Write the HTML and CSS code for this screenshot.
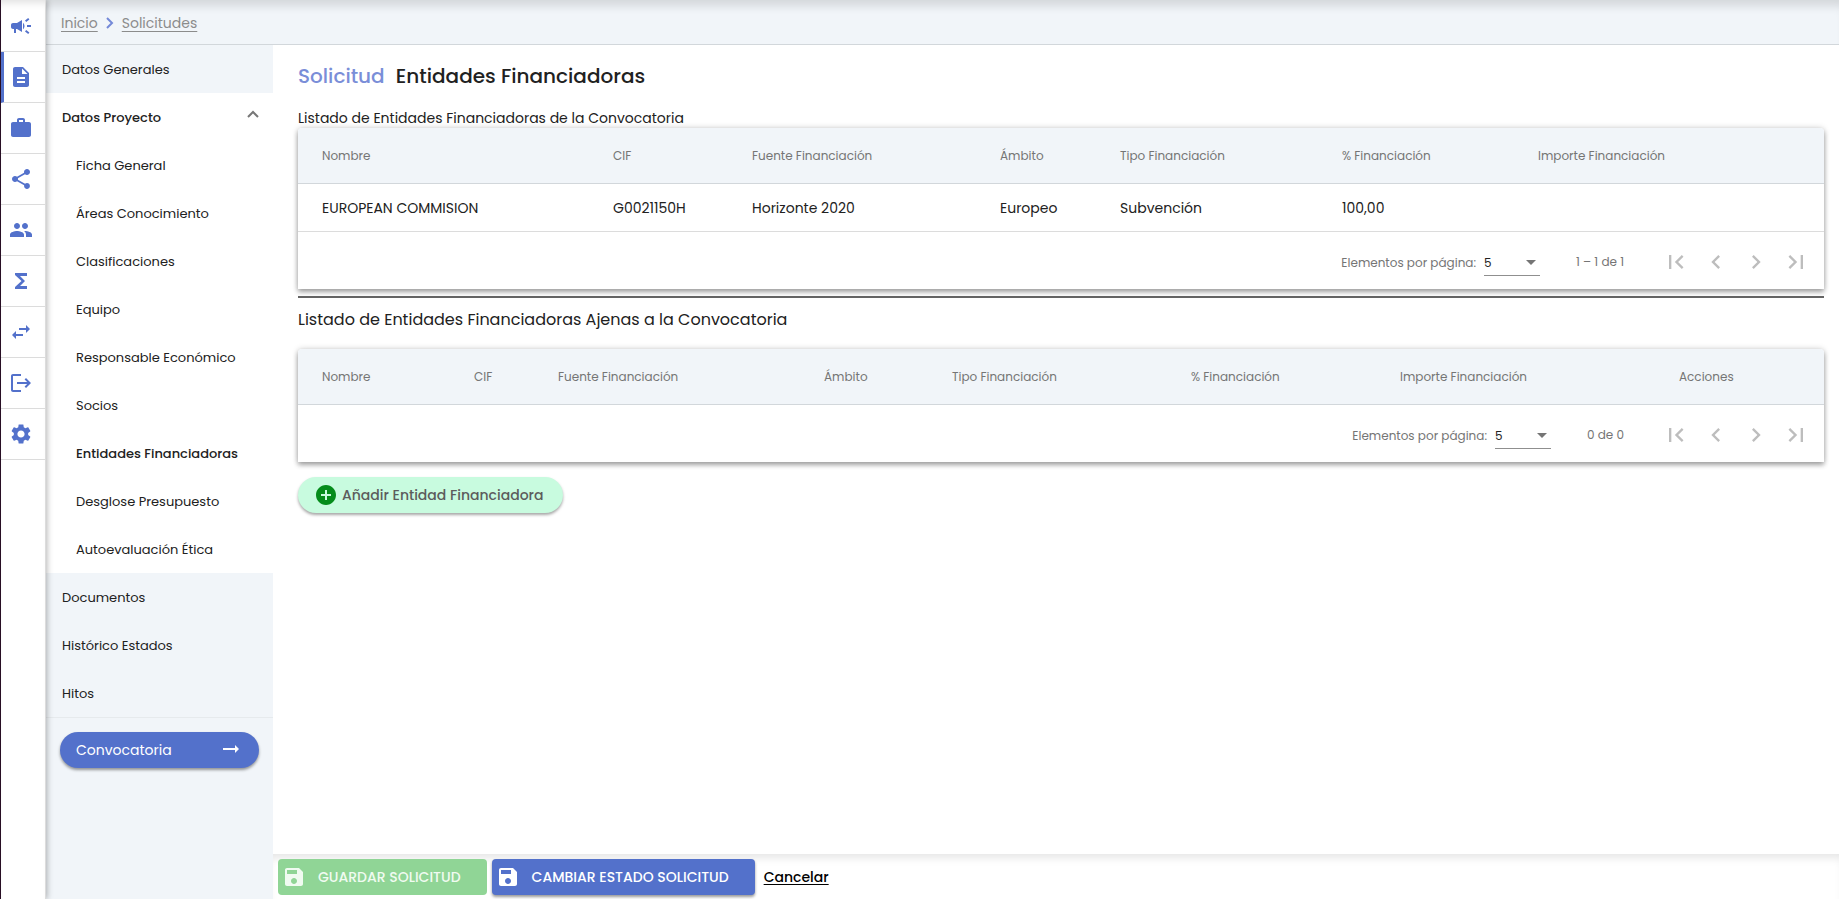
FILE: index.html
```html
<!DOCTYPE html>
<html lang="es">
<head>
<meta charset="utf-8">
<title>Solicitud - Entidades Financiadoras</title>
<link rel="stylesheet" href="styles.css">
</head>
<body>
<svg class="sprite" aria-hidden="true">
  <symbol id="i-campaign" viewBox="0 0 24 24"><path d="M18 11v2h4v-2h-4zm-2 6.610c.96.71 2.210 1.650 3.200 2.390.4-.53.8-1.070 1.200-1.600-.99-.74-2.240-1.680-3.200-2.400-.4.54-.8 1.080-1.200 1.610zM20.400 5.600c-.4-.53-.8-1.070-1.200-1.600-.99.74-2.240 1.680-3.200 2.400.4.53.8 1.070 1.200 1.600.96-.72 2.210-1.650 3.200-2.400zM4 9c-1.100 0-2 .9-2 2v2c0 1.100.9 2 2 2h1v4h2v-4h1l5 3V6L8 9H4zm11.500 3c0-1.330-.58-2.530-1.500-3.350v6.690c.92-.81 1.500-2.010 1.500-3.340z"/></symbol>
  <symbol id="i-doc" viewBox="0 0 24 24"><path d="M14 2H6c-1.100 0-1.990.9-1.990 2L4 20c0 1.100.89 2 1.990 2H18c1.100 0 2-.9 2-2V8l-6-6zm2 16H8v-2h8v2zm0-4H8v-2h8v2zm-3-5V3.500L18.500 9H13z"/></symbol>
  <symbol id="i-work" viewBox="0 0 24 24"><path d="M20 6h-4V4c0-1.110-.89-2-2-2h-4c-1.110 0-2 .89-2 2v2H4c-1.110 0-1.990.89-1.990 2L2 19c0 1.110.89 2 2 2h16c1.110 0 2-.89 2-2V8c0-1.110-.89-2-2-2zm-6 0h-4V4h4v2z"/></symbol>
  <symbol id="i-share" viewBox="0 0 24 24"><path d="M18 16.080c-.76 0-1.440.3-1.960.77L8.910 12.700c.05-.23.09-.46.09-.7s-.04-.47-.09-.7l7.050-4.110c.54.5 1.250.81 2.040.81 1.660 0 3-1.340 3-3s-1.340-3-3-3-3 1.340-3 3c0 .24.04.47.09.7L8.040 9.810C7.500 9.310 6.790 9 6 9c-1.660 0-3 1.340-3 3s1.340 3 3 3c.79 0 1.500-.31 2.040-.81l7.120 4.160c-.05.21-.08.43-.08.65 0 1.610 1.310 2.920 2.920 2.920s2.920-1.310 2.920-2.920-1.310-2.920-2.920-2.920z"/></symbol>
  <symbol id="i-people" viewBox="0 0 24 24"><path d="M16 11c1.660 0 2.990-1.340 2.990-3S17.660 5 16 5s-3 1.340-3 3 1.340 3 3 3zm-8 0c1.660 0 2.990-1.340 2.990-3S9.660 5 8 5 5 6.340 5 8s1.340 3 3 3zm0 2c-2.330 0-7 1.170-7 3.500V19h14v-2.500c0-2.330-4.670-3.500-7-3.500zm8 0c-.29 0-.62.02-.97.05 1.160.84 1.970 1.970 1.970 3.450V19h6v-2.500c0-2.330-4.670-3.500-7-3.500z"/></symbol>
  <symbol id="i-sum" viewBox="0 0 24 24"><path d="M18 4H6v2l6.500 6L6 18v2h12v-3h-7l5-5-5-5h7z"/></symbol>
  <symbol id="i-swap" viewBox="0 0 24 24"><path d="M6.990 11L3 15l3.990 4v-3H14v-2H6.990v-3zM21 9l-3.990-4v3H10v2h7.010v3L21 9z"/></symbol>
  <symbol id="i-exit" viewBox="0 0 24 24"><path d="M17 7l-1.410 1.410L18.170 11H8v2h10.170l-2.580 2.580L17 17l5-5zM4 5h8V3H4c-1.100 0-2 .9-2 2v14c0 1.100.9 2 2 2h8v-2H4V5z"/></symbol>
  <symbol id="i-gear" viewBox="0 0 24 24"><path d="M19.140 12.940c.04-.3.06-.61.06-.94 0-.32-.02-.64-.07-.94l2.030-1.580c.18-.14.23-.41.12-.61l-1.920-3.320c-.12-.22-.37-.29-.59-.22l-2.390.96c-.5-.38-1.030-.7-1.620-.94l-.36-2.540c-.04-.24-.24-.41-.48-.41h-3.840c-.24 0-.43.17-.47.41l-.36 2.540c-.59.24-1.130.57-1.620.94l-2.390-.96c-.22-.08-.47 0-.59.22L2.740 8.870c-.12.21-.08.47.12.61l2.030 1.580c-.05.3-.09.63-.09.94s.02.64.07.94l-2.030 1.580c-.18.14-.23.41-.12.61l1.920 3.320c.12.22.37.29.59.22l2.390-.96c.5.38 1.030.7 1.620.94l.36 2.540c.05.24.24.41.48.41h3.840c.24 0 .44-.17.47-.41l.36-2.540c.59-.24 1.130-.56 1.620-.94l2.390.96c.22.08.47 0 .59-.22l1.920-3.320c.12-.22.07-.47-.12-.61l-2.010-1.580zM12 15.600c-1.980 0-3.600-1.620-3.600-3.600s1.620-3.600 3.600-3.600 3.600 1.620 3.600 3.600-1.620 3.600-3.600 3.600z"/></symbol>
  <symbol id="i-arrow" viewBox="0 0 24 24"><path d="M16.010 10H4v2h12.010v3L20 11l-3.990-4z"/></symbol>
  <symbol id="i-plus" viewBox="0 0 24 24"><path d="M12 2C6.480 2 2 6.480 2 12s4.480 10 10 10 10-4.480 10-10S17.520 2 12 2zm5 11h-4v4h-2v-4H7v-2h4V7h2v4h4v2z"/></symbol>
  <symbol id="i-save" viewBox="0 0 24 24"><path d="M17 3H5c-1.110 0-2 .9-2 2v14c0 1.100.89 2 2 2h14c1.100 0 2-.9 2-2V7l-4-4zm-5 16c-1.660 0-3-1.340-3-3s1.340-3 3-3 3 1.340 3 3-1.340 3-3 3zm3-10H5V5h10v4z"/></symbol>
  <symbol id="i-first" viewBox="0 0 24 24"><path d="M18.410 16.590L13.820 12l4.590-4.590L17 6l-6 6 6 6zM6 6h2v12H6z"/></symbol>
  <symbol id="i-prev" viewBox="0 0 24 24"><path d="M15.410 7.410L14 6l-6 6 6 6 1.410-1.410L10.830 12z"/></symbol>
  <symbol id="i-next" viewBox="0 0 24 24"><path d="M10 6L8.590 7.410 13.170 12l-4.580 4.590L10 18l6-6z"/></symbol>
  <symbol id="i-last" viewBox="0 0 24 24"><path d="M5.590 7.410L10.180 12l-4.590 4.590L7 18l6-6-6-6zM16 6h2v12h-2z"/></symbol>
</svg>

<div class="app">
  <nav class="rail" aria-label="Módulos">
    <a href="#" class="rail-link" aria-label="Convocatorias"><svg><use href="#i-campaign"/></svg></a>
    <a href="#" class="rail-link rail-link-active" aria-label="Solicitudes"><svg><use href="#i-doc"/></svg></a>
    <a href="#" class="rail-link" aria-label="Proyectos"><svg><use href="#i-work"/></svg></a>
    <a href="#" class="rail-link" aria-label="Compartir"><svg><use href="#i-share"/></svg></a>
    <a href="#" class="rail-link" aria-label="Grupos"><svg><use href="#i-people"/></svg></a>
    <a href="#" class="rail-link" aria-label="Totales"><svg><use href="#i-sum"/></svg></a>
    <a href="#" class="rail-link" aria-label="Intercambio"><svg><use href="#i-swap"/></svg></a>
    <a href="#" class="rail-link" aria-label="Salida"><svg><use href="#i-exit"/></svg></a>
    <a href="#" class="rail-link" aria-label="Configuración"><svg><use href="#i-gear"/></svg></a>
  </nav>

  <div class="workspace">
    <header class="topbar">
      <a href="#">Inicio</a>
      <svg class="crumb-sep" viewBox="0 0 8 12"><path d="M1 1l5 5-5 5"/></svg>
      <a href="#">Solicitudes</a>
    </header>

    <div class="body">
      <aside class="side">
        <nav>
          <a href="#" class="side-link">Datos Generales</a>
          <div class="side-group">
            <button type="button" class="side-link side-toggle" aria-expanded="true">Datos Proyecto
              <svg viewBox="0 0 12 8"><path d="M1 7l5-5 5 5"/></svg>
            </button>
            <a href="#" class="side-link side-sub">Ficha General</a>
            <a href="#" class="side-link side-sub">Áreas Conocimiento</a>
            <a href="#" class="side-link side-sub">Clasificaciones</a>
            <a href="#" class="side-link side-sub">Equipo</a>
            <a href="#" class="side-link side-sub">Responsable Económico</a>
            <a href="#" class="side-link side-sub">Socios</a>
            <a href="#" class="side-link side-sub side-current">Entidades Financiadoras</a>
            <a href="#" class="side-link side-sub">Desglose Presupuesto</a>
            <a href="#" class="side-link side-sub">Autoevaluación Ética</a>
          </div>
          <a href="#" class="side-link">Documentos</a>
          <a href="#" class="side-link">Histórico Estados</a>
          <a href="#" class="side-link">Hitos</a>
        </nav>
        <div class="side-foot">
          <a href="#" class="call-link">Convocatoria <svg><use href="#i-arrow"/></svg></a>
        </div>
      </aside>

      <div class="main">
        <main class="content">
          <h1 class="title"><span class="title-kind">Solicitud</span> Entidades Financiadoras</h1>

          <h2 class="list-title list-title-small">Listado de Entidades Financiadoras de la Convocatoria</h2>
          <section class="card">
            <table class="grid">
              <colgroup><col class="a1"><col class="a2"><col class="a3"><col class="a4"><col class="a5"><col class="a6"><col class="a7"></colgroup>
              <thead><tr><th>Nombre</th><th>CIF</th><th>Fuente Financiación</th><th>Ámbito</th><th>Tipo Financiación</th><th>% Financiación</th><th>Importe Financiación</th></tr></thead>
              <tbody><tr><td>EUROPEAN COMMISION</td><td>G0021150H</td><td>Horizonte 2020</td><td>Europeo</td><td>Subvención</td><td>100,00</td><td></td></tr></tbody>
            </table>
            <div class="pager">
              <label for="size-a">Elementos por página:</label>
              <span class="picker"><select id="size-a"><option>5</option><option>10</option><option>25</option></select></span>
              <span class="range">1 – 1 de 1</span>
              <div class="pages">
                <button type="button" disabled aria-label="Primera página"><svg><use href="#i-first"/></svg></button>
                <button type="button" disabled aria-label="Página anterior"><svg><use href="#i-prev"/></svg></button>
                <button type="button" disabled aria-label="Página siguiente"><svg><use href="#i-next"/></svg></button>
                <button type="button" disabled aria-label="Última página"><svg><use href="#i-last"/></svg></button>
              </div>
            </div>
          </section>

          <hr class="rule">

          <h2 class="list-title">Listado de Entidades Financiadoras Ajenas a la Convocatoria</h2>
          <section class="card">
            <table class="grid">
              <colgroup><col class="b1"><col class="b2"><col class="b3"><col class="b4"><col class="b5"><col class="b6"><col class="b7"><col class="b8"></colgroup>
              <thead><tr><th>Nombre</th><th>CIF</th><th>Fuente Financiación</th><th>Ámbito</th><th>Tipo Financiación</th><th>% Financiación</th><th>Importe Financiación</th><th>Acciones</th></tr></thead>
            </table>
            <div class="pager">
              <label for="size-b">Elementos por página:</label>
              <span class="picker"><select id="size-b"><option>5</option><option>10</option><option>25</option></select></span>
              <span class="range">0 de 0</span>
              <div class="pages">
                <button type="button" disabled aria-label="Primera página"><svg><use href="#i-first"/></svg></button>
                <button type="button" disabled aria-label="Página anterior"><svg><use href="#i-prev"/></svg></button>
                <button type="button" disabled aria-label="Página siguiente"><svg><use href="#i-next"/></svg></button>
                <button type="button" disabled aria-label="Última página"><svg><use href="#i-last"/></svg></button>
              </div>
            </div>
          </section>

          <button type="button" class="add"><svg><use href="#i-plus"/></svg>Añadir Entidad Financiadora</button>
        </main>

        <footer class="actions">
          <button type="button" class="action action-save" disabled><svg><use href="#i-save"/></svg>GUARDAR SOLICITUD</button>
          <button type="button" class="action action-state"><svg><use href="#i-save"/></svg>CAMBIAR ESTADO SOLICITUD</button>
          <a href="#" class="cancel">Cancelar</a>
        </footer>
      </div>
    </div>
  </div>
</div>
</body>
</html>
```

FILE: styles.css
```css
:root {
  --blue: #5371cb;
  --panel: #f1f5f9;
  --ink: #212121;
  --muted: #757575;
  --line: #dcdcdc;
}

* { box-sizing: border-box; }

body {
  margin: 0;
  font-family: Poppins, Inter, sans-serif;
  font-size: 14px;
  line-height: 20px;
  color: var(--ink);
  background: #fff;
}

a { color: inherit; text-decoration: none; }
button, select { font: inherit; color: inherit; }
svg { width: 24px; height: 24px; fill: currentColor; flex: none; }
.sprite { display: none; }

.app { display: flex; min-height: 100vh; border-left: 1px solid #2c1028; }

/* Icon rail */
.rail {
  width: 45px;
  flex: none;
  z-index: 1;
  padding-top: 1px;
  background: #fff;
  border-right: 1px solid var(--line);
  box-shadow: 1px 0 6px rgba(0, 0, 0, .3), inset 0 8px 8px -6px rgba(0, 0, 0, .14);
}
.rail-link {
  display: flex;
  align-items: center;
  height: 51px;
  padding-left: 8px;
  border-bottom: 1px solid var(--line);
  color: var(--blue);
}
.rail-link-active { border-left: 3px solid var(--blue); padding-left: 5px; }

/* Breadcrumb bar */
.workspace { flex: 1; min-width: 0; display: flex; flex-direction: column; }
.topbar {
  display: flex;
  align-items: center;
  gap: 8px;
  height: 45px;
  padding: 2px 15px 0;
  background: var(--panel);
  border-bottom: 1px solid #d2d7db;
  box-shadow: inset 0 12px 10px -6px rgba(0, 0, 0, .12);
  color: #8c8c8c;
}
.topbar a { text-decoration: underline; text-underline-offset: 3px; }
.crumb-sep { width: 8px; height: 12px; fill: none; stroke: #7489d8; stroke-width: 2; }

.body { flex: 1; display: flex; }

/* Section menu */
.side { width: 227px; flex: none; background: var(--panel); }
.side-link {
  display: flex;
  align-items: center;
  width: 100%;
  height: 48px;
  padding: 2px 14px 0 16px;
  font-size: 13px;
}
.side-group { background: #fff; }
.side-toggle { justify-content: space-between; border: 0; background: none; font-weight: 500; }
.side-toggle svg { width: 12px; height: 8px; margin-bottom: 8px; fill: none; stroke: #777; stroke-width: 2; }
.side-sub { padding-left: 30px; }
.side-current { font-weight: 500; }
.side-foot { padding: 14px 14px 0; border-top: 1px solid #e6eaed; }
.call-link {
  display: flex;
  align-items: center;
  justify-content: space-between;
  height: 36px;
  padding: 0 16px;
  border-radius: 18px;
  background: var(--blue);
  color: #fff;
  box-shadow: 0 2px 3px rgba(0, 0, 0, .4);
}

/* Page */
.main { flex: 1; min-width: 0; display: flex; flex-direction: column; }
.content { flex: 1; padding: 17px 15px 24px 25px; }
.title { margin: 0; font-size: 20px; line-height: 28px; font-weight: 500; }
.title-kind { margin-right: 6px; color: #7a8ed8; }
.list-title { margin: 0; padding: 10px 0 17px; font-size: 16px; line-height: 24px; font-weight: 400; }
.list-title-small { padding: 18px 0 0; font-size: 14px; line-height: 20px; }

.card {
  background: #fff;
  border-radius: 4px 4px 0 0;
  box-shadow: 0 3px 5px rgba(0, 0, 0, .32), 0 0 6px rgba(0, 0, 0, .18);
}
.grid { width: 100%; table-layout: fixed; border-collapse: separate; border-spacing: 0; }
.grid th, .grid td { padding: 0; text-align: left; font-weight: 400; border-bottom: 1px solid var(--line); }
.grid th { height: 56px; background: var(--panel); color: var(--muted); font-size: 12px; border-color: #d2d7db; }
.grid td { height: 48px; }
.grid th:first-child, .grid td:first-child { padding-left: 24px; }
.grid th:first-child { border-top-left-radius: 4px; }
.grid th:last-child { border-top-right-radius: 4px; }
.a1 { width: 315px; } .a2 { width: 139px; } .a3 { width: 248px; } .a4 { width: 120px; }
.a5 { width: 222px; } .a6 { width: 196px; } .a7 { width: 286px; }
.b1 { width: 176px; } .b2 { width: 84px; } .b3 { width: 266px; } .b4 { width: 128px; }
.b5 { width: 239px; } .b6 { width: 209px; } .b7 { width: 279px; } .b8 { width: 145px; }

.pager {
  display: flex;
  align-items: center;
  justify-content: flex-end;
  height: 57px;
  padding: 2px 8px 0;
  color: var(--muted);
  font-size: 12px;
}
.pager label { padding-top: 2px; }
.picker { position: relative; margin-left: 8px; width: 56px; border-bottom: 1px solid #8f8f8f; margin-top: 4px; }
.picker::after {
  content: "";
  position: absolute;
  right: 4px;
  top: 8px;
  border: 5px solid transparent;
  border-top-color: var(--muted);
  border-bottom: 0;
  pointer-events: none;
}
.picker select {
  display: block;
  width: 100%;
  height: 23px;
  padding: 0;
  border: 0;
  appearance: none;
  background: none;
  color: var(--ink);
}
.range { margin: 0 32px 0 36px; }
.pages { display: flex; }
.pages button {
  display: grid;
  place-items: center;
  width: 40px;
  height: 40px;
  padding: 0;
  border: 0;
  background: none;
  color: #bdbdbd;
}
.pages svg { width: 28px; height: 28px; }

.rule { margin: 7px 0 0; border: 0; height: 2px; background: #646464; }

.add {
  display: flex;
  align-items: center;
  gap: 4px;
  height: 36px;
  margin-top: 15px;
  padding: 0 20px 0 16px;
  border: 0;
  border-radius: 18px;
  background: #c8fbdf;
  color: #5c5c5c;
  font-weight: 500;
  box-shadow: 0 2px 3px rgba(0, 0, 0, .35);
}
.add svg { color: #058c1b; }

/* Bottom action bar */
.actions {
  display: flex;
  align-items: center;
  gap: 5px;
  padding: 5px 5px 4px;
  box-shadow: inset 0 8px 8px -4px rgba(0, 0, 0, .1);
}
.action {
  display: flex;
  align-items: center;
  gap: 12px;
  height: 36px;
  padding: 0 26px 0 4px;
  border: 0;
  border-radius: 4px;
  color: #fff;
  font-weight: 500;
}
.action-save { background: #90d596; color: #f0fbf1; }
.action-state { background: var(--blue); box-shadow: 0 2px 3px rgba(0, 0, 0, .4); }
.cancel { margin-left: 4px; color: #000; font-weight: 500; text-decoration: underline; text-underline-offset: 2px; }
```
